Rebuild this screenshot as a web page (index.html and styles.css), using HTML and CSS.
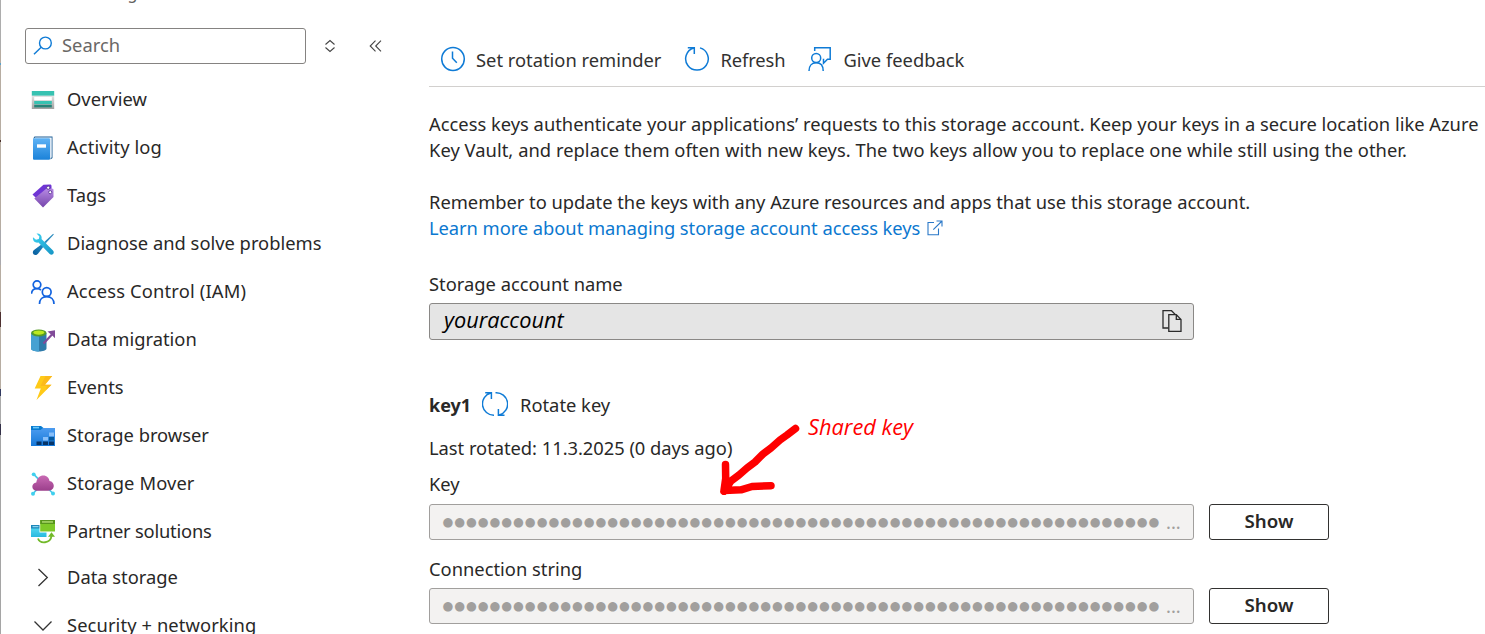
FILE: index.html
```
<!DOCTYPE html>
<html lang="en">
<head>
<meta charset="utf-8">
<title>Access keys</title>
<link rel="stylesheet" href="styles.css">
</head>
<body>
<div class="app">
  <div class="edge"></div>
  <aside class="sidebar">
    <div class="resource-type">Storage account</div>
    <div class="search-row">
      <div class="search">
        <svg class="search-icon" width="20" height="20" viewBox="0 0 20 20" fill="none" stroke="#0f7bd6" stroke-width="1.4"><circle cx="12.4" cy="8" r="5.9"/><path d="M8.2 12.200L1 19.300"/></svg>
        <span>Search</span>
      </div>
      <svg class="sort" width="12" height="14" viewBox="0 0 12 14" fill="none" stroke="#444" stroke-width="1.1"><path d="M1.5 5.5L6 1.500l4.500 4M1.500 8.500L6 12.500l4.500-4"/></svg>
      <svg class="collapse" width="13" height="12" viewBox="0 0 13 12" fill="none" stroke="#444" stroke-width="1.1"><path d="M6.500.7L1.200 6l5.300 5.300M12 .7L6.700 6l5.300 5.300"/></svg>
    </div>
    <nav class="nav">
      <a class="item"><svg width="24" height="24" viewBox="0 0 24 24"><defs><linearGradient id="ov" x2="0" y2="1"><stop stop-color="#e8e8e8"/><stop offset="1" stop-color="#a0a0a0"/></linearGradient></defs><path fill="url(#ov)" d="M.8 7h22.400v14H.8z"/><path fill="#37c2b1" d="M.8 3h22.400v4.600H.8z"/><path fill="#fff" d="M3.200 9h17.600v3.300H3.200z"/><path fill="#37c2b1" d="M3.200 13h17.600v3.200H3.200z"/><path fill="#258277" d="M3.200 16.800h17.600v2.600H3.200z"/></svg><span>Overview</span></a>
      <a class="item fit-a"><svg width="24" height="24" viewBox="0 0 24 24"><defs><linearGradient id="al" x2="0" y2="1"><stop stop-color="#5eb2f5"/><stop offset="1" stop-color="#1b82d9"/></linearGradient></defs><path fill="#1e5f96" d="M3.500.5H21.500V22l-2 1.500V2.500H2.200z"/><path fill="#eef6fd" d="M4 1.400h16.700v20.200l-1.500.5V3H3z"/><rect x="2" y="2.300" width="17" height="21.500" rx="1" fill="url(#al)"/><path fill="#fff" d="M6 8.300h9v3.400H6z"/></svg><span>Activity log</span></a>
      <a class="item"><svg width="24" height="24" viewBox="0 0 24 24"><defs><linearGradient id="tg" x2="0" y2="1"><stop stop-color="#b78ae4"/><stop offset="1" stop-color="#7545ab"/></linearGradient></defs><path fill="#6f35d4" d="M12.500.8L19 .5c1 0 1.500.6 1.500 1.500v6L9.500 18.500l-8-8z"/><path fill="url(#tg)" d="M15.500 4.500l5.800.3c.8 0 1.200.5 1.200 1.200v7L12 23.500 3.300 14.500z"/><circle cx="17.200" cy="3.700" r="1.600" fill="#fff" stroke="#482a86" stroke-width=".8"/><circle cx="19.200" cy="8.200" r="1.600" fill="#fff" stroke="#6840a0" stroke-width="1"/></svg><span>Tags</span></a>
      <a class="item"><svg width="24" height="24" viewBox="0 0 24 24"><defs><linearGradient id="d1" x1="1" x2="0" y2="1"><stop stop-color="#2898cf"/><stop offset="1" stop-color="#075b9b"/></linearGradient><linearGradient id="d2" x2="1" y2="1"><stop stop-color="#3cd4f4"/><stop offset="1" stop-color="#1694c4"/></linearGradient></defs><path d="M22.200 1.800l.6.800L15 11l-1.500-1.300z" fill="#2789bd"/><path fill="url(#d1)" d="M14 9.700l1.300 1.400L7 21.800c-1.500 1.800-3.500 1.500-4.500.5s-1-2.800.5-4.200z"/><path fill="url(#d2)" d="M5.500 1.500c3.500-.5 5.800 2.200 5 5.500L22 18.500c2.300 2.500-1 5.700-3.300 3.500L7.500 10.500C4 11.300 1.300 8.800 2 5.200l3 2.600 2.800-.7.600-2.700z"/></svg><span>Diagnose and solve problems</span></a>
      <a class="item fit-b"><svg width="24" height="24" viewBox="0 0 24 24" fill="none" stroke="#1263df" stroke-width="1.700"><circle cx="6" cy="4.700" r="3.800"/><path d="M.5 13.800C.7 10 3 8.700 6 8.700c1.600 0 3 .4 4 1.300"/><circle cx="15.700" cy="12" r="4.400"/><path d="M8.500 24c0-4.500 3-7.300 7.200-7.300s7.300 2.800 7.300 7.300"/></svg><span>Access Control (IAM)</span></a>
      <a class="item"><svg width="24" height="24" viewBox="0 0 24 24"><path fill="#2f7baa" d="M0 5h15.500v15.500c0 4-15.500 4-15.500 0z"/><path fill="#46a1d2" d="M0 5h8v18.500c-4.500 0-8-1-8-3z"/><ellipse cx="7.800" cy="5" rx="7.700" ry="3.400" fill="#559b25"/><ellipse cx="7.800" cy="4.600" rx="5.600" ry="2.100" fill="#bcea20"/><path d="M12.500 15.500L21 6.500" stroke="#814b99" stroke-width="2.200"/><path fill="#814b99" d="M24 2.300v8l-2.700-2.700L16.500 3.600z"/></svg><span>Data migration</span></a>
      <a class="item"><svg width="24" height="24" viewBox="0 0 24 24"><path fill="#ffca18" d="M9.500 0h11.700L14 8.700h6.500L5.500 24l4.300-11.500H3.700z"/><path fill="#fbb51c" d="M14.500 0h6.700L14 8.700h6.500L15 14l1-4H9.500z" opacity=".8"/></svg><span>Events</span></a>
      <a class="item"><svg width="24" height="24" viewBox="0 0 24 24"><defs><linearGradient id="sb" x2="0" y2="1"><stop stop-color="#4d9cf0"/><stop offset="1" stop-color="#1678d8"/></linearGradient></defs><path fill="#087bd0" d="M0 2h10l2.500 2V8H0z"/><path fill="#69c8fa" d="M2 2.800h6v1.600H2z"/><path fill="url(#sb)" d="M0 6h9.500L12 4h12v18H0z"/><path fill="#88bff9" d="M18 8.500h5v3.700h-5zM12 13h5v3.500h-5z"/><path fill="#075a9e" d="M18 13h5v3.500h-5z"/><path fill="#063468" d="M5.500 17.500h5v3.500h-5zM12 17.500h5v3.500h-5zM18 17.500h5v3.500h-5z"/></svg><span>Storage browser</span></a>
      <a class="item fit-a"><svg width="24" height="24" viewBox="0 0 24 24"><defs><linearGradient id="sm" x2="0" y2="1"><stop stop-color="#c96ab4"/><stop offset="1" stop-color="#9b3f8b"/></linearGradient></defs><g stroke="#48c8ea" stroke-width="1.700"><path d="M2.500 2.200l6 6M2 21.500l5-5M22 21.500l-5-5"/></g><g fill="#3fd0ee"><circle cx="2.700" cy="2.300" r="1.900"/><circle cx="2" cy="21.800" r="2"/><circle cx="22" cy="21.500" r="2"/></g><path fill="url(#sm)" d="M6 18.700c-6 0-6.200-7.500-.7-8.200C6 5.500 9 3.400 12.200 3.400c3.800 0 6 2.500 6.300 5.600 6 .8 5.700 9.700-1 9.700z"/></svg><span>Storage Mover</span></a>
      <a class="item fit-c"><svg width="24" height="24" viewBox="0 0 24 24"><defs><linearGradient id="ps" x2="0" y2="1"><stop stop-color="#5ee1f5"/><stop offset="1" stop-color="#29b9df"/></linearGradient></defs><path fill="url(#ps)" d="M0 5h15.500v12H0z"/><path fill="#1d86b9" d="M0 5h10v3.500H0z"/><path fill="#a5e9fb" d="M1.500 6.200h6v1h-6z"/><path fill="#fff" d="M8.500 0H24v12.500H8.500z"/><path fill="#7ec928" d="M9.200 0H24v11.500H9.200z"/><path fill="#58961c" d="M9.200 0H24v4H9.200z"/><path fill="#b9e27a" d="M11 1.300h11v1.300H11z"/><path d="M7 18.500c2 5.500 12.500 5.500 13.600-3" fill="none" stroke="#72b929" stroke-width="1.900"/><path fill="#72b929" d="M20.500 12.200l3.500 4.600h-7z"/></svg><span>Partner solutions</span></a>
      <a class="item group"><svg width="24" height="24" viewBox="0 0 24 24" fill="none" stroke="#333" stroke-width="1.300"><path d="M7.500 3L16.300 11.500l-8.800 8.500"/></svg><span>Data storage</span></a>
      <a class="item group open fit-a"><svg width="24" height="24" viewBox="0 0 24 24" fill="none" stroke="#333" stroke-width="1.300"><path d="M3.500 7.500L12 16l8.500-8.500"/></svg><span>Security + networking</span></a>
    </nav>
  </aside>

  <main class="content">
    <div class="toolbar">
      <button class="command reminder"><svg width="26" height="26" viewBox="0 0 26 26" fill="none" stroke="#0f7bd6" stroke-width="1.500"><ellipse cx="13" cy="13" rx="11.300" ry="11.500"/><path d="M12.500 5.500v6.800l4.300 4.500"/></svg><span>Set rotation reminder</span></button>
      <button class="command refresh"><svg width="26" height="26" viewBox="0 0 26 26" fill="none" stroke="#0f7bd6" stroke-width="1.500"><path d="M16 1.900A11.300 11.300 0 1 1 9.600 2M3.800 1.700h6.500v6.400"/></svg><span>Refresh</span></button>
      <button class="command feedback"><svg width="26" height="26" viewBox="0 0 26 26" fill="none" stroke="#0f7bd6" stroke-width="1.500"><path d="M8.700 5V1.700h15.500v11.500h-2.700l-4 4v-4.500"/><circle cx="10.200" cy="12" r="4.500"/><path d="M3 25c0-5 2.800-8.200 7.200-8.200s7 3.200 7 8.200"/></svg><span>Give feedback</span></button>
    </div>

    <section class="intro">
      <p class="line-1">Access keys authenticate your applications’ requests to this storage account. Keep your keys in a secure location like Azure</p>
      <p class="line-2">Key Vault, and replace them often with new keys. The two keys allow you to replace one while still using the other.</p>
      <p class="gap-above">Remember to update the keys with any Azure resources and apps that use this storage account.</p>
      <p><a class="link"><span>Learn more about managing storage account access keys</span><svg width="16" height="16" viewBox="0 0 16 16" fill="none" stroke="#2a78c8" stroke-width="1.100"><path d="M7 2.500H1v12.300h10.500V8.500M9.500 1H15v5.500M15 1L6.300 9.700"/></svg></a></p>
    </section>

    <section class="account">
      <label>Storage account name</label>
      <div class="field name-field"><span>youraccount</span><svg width="20" height="24" viewBox="0 0 20 24" fill="none" stroke="#2b2b2b" stroke-width="1.300"><path d="M6.500 19H1V1.700h8.500l3.700 3.700"/><path d="M6.800 5.700h7.500l4.700 4.700v12H6.800zM14.300 5.700v4.700H19"/></svg></div>
    </section>

    <section class="key">
      <div class="key-head">
        <b>key1</b>
        <svg width="26" height="26" viewBox="0 0 26 26" fill="none" stroke="#0f7bd6" stroke-width="1.500"><path d="M12 24.200A11.300 11.300 0 0 1 8.800 2M3.200 1.700h6.200v6.400M13.500 1.800A11.300 11.300 0 0 1 17.200 24M22.500 24.300h-6.100v-6.400"/></svg>
        <span>Rotate key</span>
      </div>
      <p class="rotated">Last rotated: 11.3.2025 (0 days ago)</p>
      <label>Key</label>
      <div class="secret-row">
        <div class="field secret"><span class="dots">●●●●●●●●●●●●●●●●●●●●●●●●●●●●●●●●●●●●●●●●●●●●●●●●●●●●●●●●●●●●●</span><span class="more">...</span></div>
        <button class="show">Show</button>
      </div>
      <label class="connection">Connection string</label>
      <div class="secret-row">
        <div class="field secret"><span class="dots">●●●●●●●●●●●●●●●●●●●●●●●●●●●●●●●●●●●●●●●●●●●●●●●●●●●●●●●●●●●●●</span><span class="more">...</span></div>
        <button class="show">Show</button>
      </div>
      <div class="note">
        <svg width="84" height="74" viewBox="716 422 84 74" fill="none" stroke="#fe0000" stroke-width="7.500" stroke-linecap="round" stroke-linejoin="round"><path d="M795.500 429.500L787 436l-7 5-9 8-8 6-8 8-8 6-8 7-8 6-7 10.500M725.500 465.500l.2 14-1.700 12 17-.7 11-3.300 19-.8"/></svg>
        <span>Shared key</span>
      </div>
    </section>
  </main>
</div>
</body>
</html>
```
FILE: styles.css
```
* { box-sizing: border-box; }

body {
  margin: 0;
  height: 634px;
  overflow: hidden;
  background: #fff;
  color: #292827;
  font: 18.33px/26px "Noto Sans", "Open Sans", sans-serif;
}

p { margin: 0; }
svg { display: block; flex: none; }
span, b, label, p { white-space: nowrap; }

button {
  padding: 0;
  border: 0;
  background: none;
  color: inherit;
  font: inherit;
}

.app {
  display: grid;
  grid-template-columns: 1px 428px 1fr;
  height: 634px;
  overflow: hidden;
}

.edge {
  background: linear-gradient(#adadad 0 50px, #b7ada2 50px 63px, #5ba1c9 63px 65px, #b7ada2 65px 140px, #4a302a 140px 142px, #b7ada2 142px 230px, #aaa9ad 230px 265px, #b7ada2 265px 312px, #4d3030 312px 327px, #b7ada2 327px 389px, #30385f 389px 396px, #aaa 396px 424px, #333048 424px 435px, #a5a5a5 435px);
}

.sidebar { padding-left: 24px; }

.resource-type {
  height: 28px;
  margin: -18px 0 18px;
  padding-left: 63px;
  color: #605e5c;
  font-size: 16px;
  line-height: 22px;
}

.search-row {
  display: flex;
  align-items: center;
  height: 36px;
}

.search {
  display: flex;
  align-items: center;
  gap: 9px;
  width: 281px;
  height: 36px;
  padding: 0 8px 2px 7px;
  border: 1px solid #858381;
  border-radius: 3px;
  color: #6a6866;
}

.sort { margin-left: 18px; }
.collapse { margin-left: 33px; }

.nav { padding: 11px 0 0 6px; }

.item {
  display: flex;
  align-items: center;
  gap: 12px;
  height: 48px;
}

.item svg { margin-top: 1px; }
.item.group { height: 46px; margin-top: -1px; }
.item.group.open { height: 48px; margin-top: 1px; }

.fit-a { letter-spacing: 0.1px; }
.fit-b { letter-spacing: 0.16px; }
.fit-c { letter-spacing: -0.2px; }

.toolbar {
  display: flex;
  align-items: center;
  gap: 23px;
  height: 87px;
  padding: 32px 0 0 11px;
  border-bottom: 1px solid #d2d0ce;
}

.command {
  display: flex;
  align-items: center;
  gap: 10px;
  height: 54px;
  color: #323130;
}

.command span { padding-top: 2px; }
.command.refresh { letter-spacing: -0.1px; }
.command.feedback { gap: 11px; margin-left: -2px; }

.intro { padding-top: 24px; }
.line-2 { letter-spacing: 0.04px; }
.gap-above { margin-top: 26px; letter-spacing: -0.02px; }

.link {
  display: flex;
  align-items: center;
  gap: 7px;
  color: #0b78d0;
  letter-spacing: -0.05px;
}

.link svg { margin-top: -1px; }

.account { padding-top: 30px; }

label {
  display: block;
  height: 26px;
}

.field {
  display: flex;
  align-items: center;
  width: 765px;
  height: 36px;
  border: 1px solid #a19f9d;
  border-radius: 3px;
}

.name-field {
  justify-content: space-between;
  height: 37px;
  margin-top: 6px;
  padding: 0 11px 2px 14px;
  border-color: #8a8886;
  background: #e5e5e5;
  color: #000;
  font: italic 21.7px/30px "Open Sans", "Noto Sans", sans-serif;
}

.name-field span { padding-bottom: 2px; }

.key {
  position: relative;
  padding-top: 52px;
}

.key-head {
  display: flex;
  align-items: center;
  height: 26px;
}

.key-head b { width: 53px; font-size: 18px; }
.key-head svg { margin: -2px 12px 0 0; }

.rotated { margin-top: 17px; letter-spacing: -0.03px; }
.rotated + label { margin-top: 10px; }

.secret-row {
  display: flex;
  gap: 15px;
  margin-top: 7px;
}

.secret {
  padding-left: 12.5px;
  background: #f3f2f1;
  color: #a19f9d;
}

.dots {
  width: 723.5px;
  font: 12.4px/20px "DejaVu Sans", sans-serif;
  letter-spacing: 0.955px;
}

.connection { margin-top: 16px; }
.connection + .secret-row { margin-top: 6px; }

.show {
  width: 120px;
  height: 36px;
  border: 1px solid #323130;
  border-radius: 3px;
  padding-bottom: 3px;
  font-size: 18.7px;
  font-weight: 600;
}

.note {
  position: absolute;
  top: 81px;
  left: 287px;
  display: flex;
  gap: 8px;
  color: #f00;
}

.note span { font: italic 21.8px/12px "Open Sans", "Noto Sans", sans-serif; }
```
